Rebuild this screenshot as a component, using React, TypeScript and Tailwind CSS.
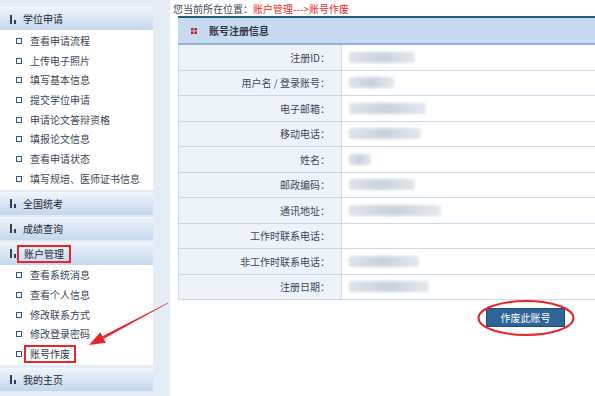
import React from "react";

const cjk = { fontFamily: '"Noto Sans CJK SC", "Noto Sans", sans-serif' };

type Section = { title: string; items: string[]; boxed?: boolean };

const sections: Section[] = [
  {
    title: "学位申请",
    items: [
      "查看申请流程",
      "上传电子照片",
      "填写基本信息",
      "提交学位申请",
      "申请论文答辩资格",
      "填报论文信息",
      "查看申请状态",
      "填写规培、医师证书信息",
    ],
  },
  { title: "全国统考", items: [] },
  { title: "成绩查询", items: [] },
  {
    title: "账户管理",
    boxed: true,
    items: ["查看系统消息", "查看个人信息", "修改联系方式", "修改登录密码", "账号作废"],
  },
  { title: "我的主页", items: [] },
];

const rows = [
  { label: "注册ID：", blur: 66 },
  { label: "用户名 / 登录账号：", blur: 45 },
  { label: "电子邮箱：", blur: 77 },
  { label: "移动电话：", blur: 72 },
  { label: "姓名：", blur: 22 },
  { label: "邮政编码：", blur: 66 },
  { label: "通讯地址：", blur: 92 },
  { label: "工作时联系电话：", blur: 0 },
  { label: "非工作时联系电话：", blur: 70 },
  { label: "注册日期：", blur: 80 },
];

function BarsIcon() {
  return (
    <svg width="6" height="9" viewBox="0 0 6 9" className="shrink-0">
      <rect x="0" y="0" width="2" height="9" fill="#3a3f48" />
      <rect x="4" y="5" width="2" height="4" fill="#3a3f48" />
    </svg>
  );
}

function SectionHeader({ title, boxed }: { title: string; boxed?: boolean }) {
  return (
    <div className="flex h-[23px] items-center border-t border-[#f4f8fd] bg-gradient-to-b from-[#eef4fb] to-[#c3d7ee] pl-[10px] text-[10px] text-[#1d2530]">
      <BarsIcon />
      <span
        className={
          boxed
            ? "ml-[1px] border-2 border-[#e8252a] px-[5px] leading-[14px]"
            : "ml-[7px] leading-[14px]"
        }
      >
        {title}
      </span>
    </div>
  );
}

export default function App() {
  return (
    <div className="relative flex h-[396px] w-[595px] overflow-hidden bg-white" style={cjk}>
      {/* left menu */}
      <div className="flex h-full w-[170px] shrink-0 bg-[#e4ecf7] pt-[7px]">
        <div className="flex w-[153px] flex-col">
          {sections.map((s, i) => (
            <div key={s.title} className={i === 0 ? "" : i === 4 ? "mt-[3px]" : "mt-[2px]"}>
              <SectionHeader title={s.title} boxed={s.boxed} />
              {s.items.length > 0 && (
                <ul className="bg-white pt-[1px] pb-[1px]">
                  {s.items.map((it) => (
                    <li key={it} className="flex h-[19.7px] items-center pl-[16px] text-[10px] text-[#3c4654]">
                      <span className="h-[6px] w-[6px] shrink-0 border-[1.5px] border-[#2b5b8c]" />
                      {it === "账号作废" ? (
                        <span className="ml-[2px] border-2 border-[#e8252a] px-[4px] leading-[14px] text-[#333b47]">
                          {it}
                        </span>
                      ) : (
                        <span className="ml-[8px] leading-[14px]">{it}</span>
                      )}
                    </li>
                  ))}
                </ul>
              )}
            </div>
          ))}
        </div>
      </div>

      {/* main */}
      <div className="flex min-w-0 flex-1 flex-col">
        <div className="h-[16px] pl-[3px] text-[10px] leading-[17px] text-[#3d4a5c]">
          您当前所在位置：<span className="text-[#f0262b]">账户管理---&gt;账号作废</span>
        </div>
        <div className="ml-[8px] border-t-2 border-[#1f5f7a]">
          <div className="flex h-[27px] items-center border-b-2 border-[#8db2dc] bg-[#c8daef] pl-[13px]">
            <svg width="6" height="6" viewBox="0 0 6 6">
              <rect x="0" y="0" width="2.5" height="2.5" fill="#c0162a" />
              <rect x="3.5" y="0" width="2.5" height="2.5" fill="#c0162a" />
              <rect x="0" y="3.5" width="2.5" height="2.5" fill="#c0162a" />
              <rect x="3.5" y="3.5" width="2.5" height="2.5" fill="#c0162a" />
            </svg>
            <span className="ml-[12px] text-[10px] font-bold text-[#2a3444]">账号注册信息</span>
          </div>
          <div className="border-l border-[#c9d8ec]">
            {rows.map((r) => (
              <div key={r.label} className="flex h-[25.5px] border-b border-[#c9d8ec]">
                <div className="flex w-[163px] shrink-0 items-center justify-end border-r border-[#c9d8ec] bg-[#eef3fa] pr-[11px] text-[10px] text-[#3a4657]">
                  {r.label}
                </div>
                <div className="flex flex-1 items-center pl-[7px]">
                  {r.blur > 0 && (
                    <div
                      className="h-[11px] rounded-[2px] bg-gradient-to-r from-[#dde3ea] via-[#c8d1dc] to-[#e4e8ee] blur-[1.5px]"
                      style={{ width: r.blur }}
                    />
                  )}
                </div>
              </div>
            ))}
          </div>
          <div className="flex justify-end pt-[8px] pr-[30px]">
            <button className="relative h-[19px] w-[79px] border border-[#1d4d7a] bg-[#2f6497] text-[10px] text-white">
              作废此账号
              <svg
                className="pointer-events-none absolute left-[-10px] top-[-10px]"
                width="98"
                height="38"
                viewBox="0 0 98 38"
              >
                <ellipse cx="49" cy="19" rx="47.5" ry="17" fill="none" stroke="#e8252a" strokeWidth="2" />
              </svg>
            </button>
          </div>
        </div>
      </div>

      {/* red arrow overlay */}
      <svg className="pointer-events-none absolute left-0 top-0" width="595" height="396">
        <polygon points="168.1,303.3 167.9,302.7 102.4,336.2 103.8,338.8" fill="#e8252a" />
        <polygon points="89,345 100.3,332.2 105.9,342.8" fill="#e8252a" />
      </svg>
    </div>
  );
}
